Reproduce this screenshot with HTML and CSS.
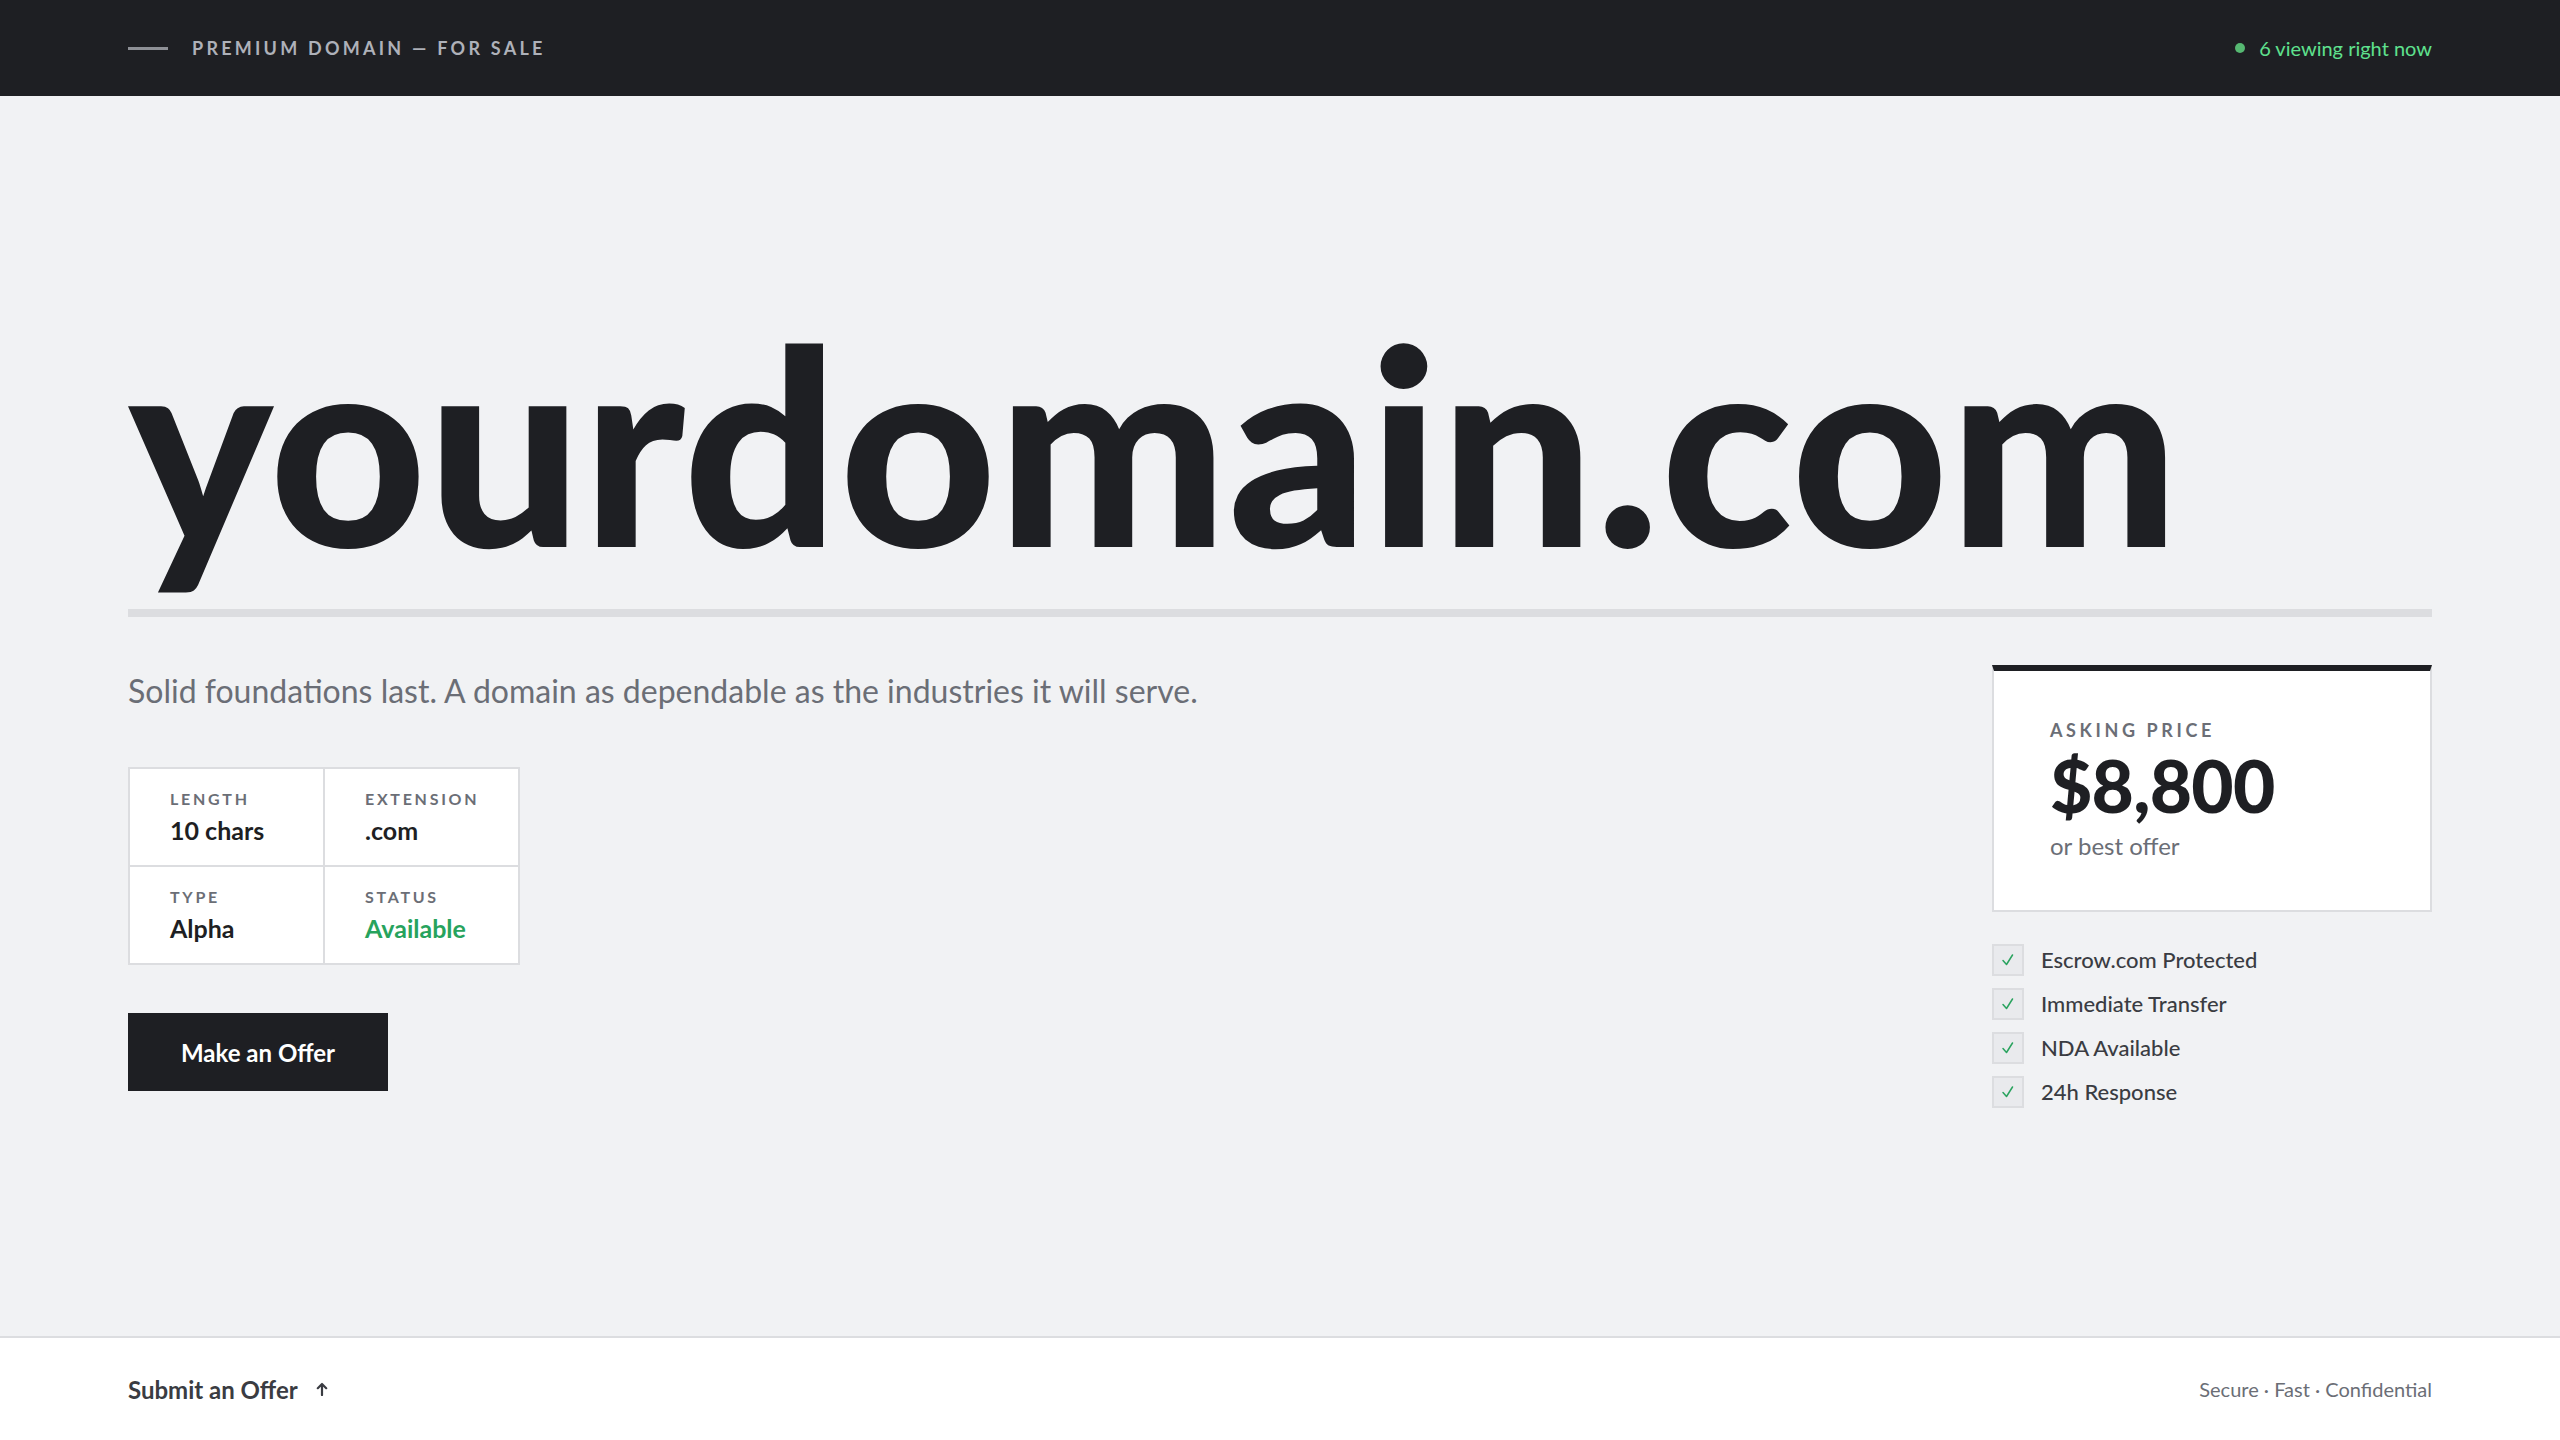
FILE: index.html
```html
<!DOCTYPE html>
<html lang="en">
<head>
<meta charset="utf-8">
<title>yourdomain.com — Premium Domain For Sale</title>
<link rel="stylesheet" href="styles.css">
</head>
<body>
<header class="topbar">
  <div class="brand">
    <span class="brand-line"></span>
    <span class="brand-text">PREMIUM DOMAIN — FOR SALE</span>
  </div>
  <div class="live">
    <span class="live-dot"></span>
    <span class="live-text">6 viewing right now</span>
  </div>
</header>

<main class="main">
  <h1 class="domain">yourdomain.com</h1>

  <section class="lower">
    <div class="left">
      <p class="tagline">Solid foundations last. A domain as dependable as the industries it will serve.</p>
      <div class="specs">
        <div class="spec">
          <div class="spec-label">LENGTH</div>
          <div class="spec-value">10 chars</div>
        </div>
        <div class="spec">
          <div class="spec-label">EXTENSION</div>
          <div class="spec-value">.com</div>
        </div>
        <div class="spec">
          <div class="spec-label">TYPE</div>
          <div class="spec-value">Alpha</div>
        </div>
        <div class="spec">
          <div class="spec-label">STATUS</div>
          <div class="spec-value available">Available</div>
        </div>
      </div>
      <button class="offer-btn" type="button">Make an Offer</button>
    </div>

    <aside class="right">
      <div class="price-card">
        <div class="price-label">ASKING PRICE</div>
        <div class="price">$8,800</div>
        <div class="price-note">or best offer</div>
      </div>
      <ul class="features">
        <li class="feature"><span class="check"><svg viewBox="0 0 16 16" width="16" height="16"><polyline points="3,8.5 6.5,12.5 12.5,3" fill="none" stroke="#2aa35f" stroke-width="1.5" stroke-linecap="round" stroke-linejoin="round"/></svg></span>Escrow.com Protected</li>
        <li class="feature"><span class="check"><svg viewBox="0 0 16 16" width="16" height="16"><polyline points="3,8.5 6.5,12.5 12.5,3" fill="none" stroke="#2aa35f" stroke-width="1.5" stroke-linecap="round" stroke-linejoin="round"/></svg></span>Immediate Transfer</li>
        <li class="feature"><span class="check"><svg viewBox="0 0 16 16" width="16" height="16"><polyline points="3,8.5 6.5,12.5 12.5,3" fill="none" stroke="#2aa35f" stroke-width="1.5" stroke-linecap="round" stroke-linejoin="round"/></svg></span>NDA Available</li>
        <li class="feature"><span class="check"><svg viewBox="0 0 16 16" width="16" height="16"><polyline points="3,8.5 6.5,12.5 12.5,3" fill="none" stroke="#2aa35f" stroke-width="1.5" stroke-linecap="round" stroke-linejoin="round"/></svg></span>24h Response</li>
      </ul>
    </aside>
  </section>
</main>

<footer class="footer">
  <a class="submit" href="#">Submit an Offer <svg class="arrow" viewBox="0 0 12 14" width="12" height="14"><path d="M6 13V2M1.8 6.2L6 2l4.2 4.2" fill="none" stroke="#3a3c42" stroke-width="2.2" stroke-linecap="round" stroke-linejoin="round"/></svg></a>
  <div class="assure">Secure · Fast · Confidential</div>
</footer>
</body>
</html>
```

FILE: styles.css
```css
* { box-sizing: border-box; }

html, body {
  margin: 0;
  padding: 0;
}

body {
  min-height: 100vh;
  display: flex;
  flex-direction: column;
  background: #f1f2f4;
  color: #1e1f23;
  font-family: "Lato", "Noto Sans", sans-serif;
}

/* Top bar */
.topbar {
  height: 96px;
  background: #1e1f23;
  padding: 0 128px;
  display: flex;
  align-items: center;
  justify-content: space-between;
}

.brand {
  display: flex;
  align-items: center;
  gap: 24px;
}

.brand-line {
  width: 40px;
  height: 3px;
  background: #8e9096;
}

.brand-text {
  font-size: 18px;
  font-weight: 700;
  letter-spacing: 0.18em;
  color: #aeb1b9;
}

.live {
  display: flex;
  align-items: center;
  gap: 14px;
}

.live-dot {
  width: 10px;
  height: 10px;
  border-radius: 50%;
  background: #56b872;
}

.live-text {
  font-size: 20px;
  color: #5fe18e;
}

/* Main */
.main {
  flex: 1;
  padding: 178px 128px 0;
}

.domain {
  margin: 0 0 48px;
  font-size: 273px;
  font-weight: 900;
  line-height: 335px;
  letter-spacing: 0.5px;
  color: #1e1f23;
  border-bottom: 8px solid #dcdde0;
}

.lower {
  display: flex;
  justify-content: space-between;
  align-items: flex-start;
}

.left {
  display: flex;
  flex-direction: column;
  align-items: flex-start;
}

.tagline {
  margin: 0 0 50px;
  font-size: 32px;
  line-height: 52px;
  font-weight: 400;
  color: #6b6e76;
}

.specs {
  display: grid;
  grid-template-columns: 193px 193px;
  gap: 2px;
  background: #dcdde0;
  border: 2px solid #dcdde0;
}

.spec {
  background: #ffffff;
  height: 96px;
  padding: 21px 40px 0;
}

.spec-label {
  font-size: 16px;
  line-height: 18px;
  font-weight: 700;
  letter-spacing: 0.17em;
  color: #6b6e76;
}

.spec-value {
  margin-top: 6px;
  font-size: 25px;
  line-height: 32px;
  font-weight: 700;
  color: #1e1f23;
}

.spec-value.available {
  color: #27a35d;
}

.offer-btn {
  margin-top: 48px;
  height: 78px;
  width: 260px;
  padding: 0;
  border: 0;
  background: #1e1f23;
  color: #ffffff;
  font-family: inherit;
  font-size: 24px;
  font-weight: 700;
  cursor: pointer;
}

/* Right column */
.right {
  width: 440px;
}

.price-card {
  background: #ffffff;
  border: 2px solid #dcdde0;
  border-top: 6px solid #1e1f23;
  padding: 48px 56px 47px;
}

.price-label {
  font-size: 18px;
  line-height: 22px;
  font-weight: 700;
  letter-spacing: 0.2em;
  color: #6b6e76;
}

.price {
  margin-top: 8px;
  font-size: 73px;
  line-height: 72px;
  font-weight: 900;
  letter-spacing: -0.01em;
  color: #1e1f23;
}

.price-note {
  margin-top: 8px;
  font-size: 24px;
  line-height: 34px;
  color: #6b6e76;
}

.features {
  list-style: none;
  margin: 32px 0 0;
  padding: 0;
  display: flex;
  flex-direction: column;
  gap: 12px;
}

.feature {
  display: flex;
  align-items: center;
  gap: 17px;
  font-size: 22px;
  line-height: 32px;
  font-weight: 500;
  color: #3a3c42;
}

.check {
  width: 32px;
  height: 32px;
  flex: none;
  display: flex;
  align-items: center;
  justify-content: center;
  background: #e9eaed;
  border: 2px solid #dcdde0;
}

/* Footer */
.footer {
  height: 104px;
  background: #ffffff;
  border-top: 2px solid #dcdde0;
  padding: 0 128px;
  display: flex;
  align-items: center;
  justify-content: space-between;
}

.submit {
  display: flex;
  align-items: center;
  gap: 18px;
  font-size: 24px;
  font-weight: 700;
  color: #3a3c42;
  text-decoration: none;
}

.arrow {
  display: block;
}

.assure {
  font-size: 20px;
  color: #6b6e76;
}
```
